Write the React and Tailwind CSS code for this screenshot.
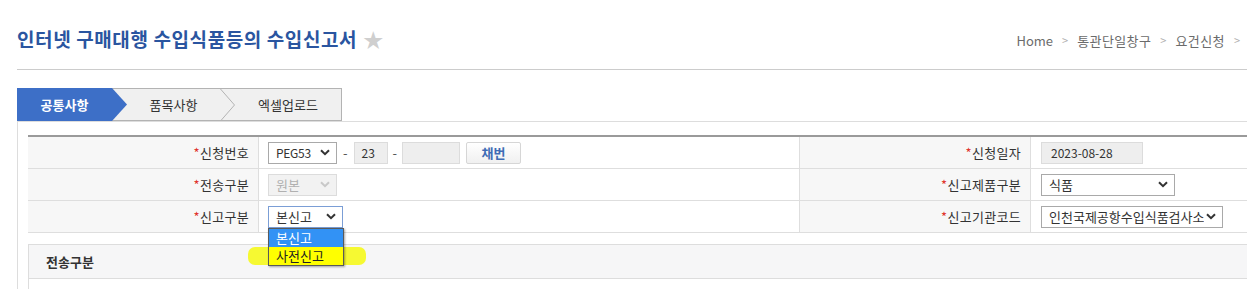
import React from "react";

const FONT = { fontFamily: '"Noto Sans CJK KR", "Noto Sans", sans-serif' };

const Chevron = ({ className = "" }) => (
  <svg width="10" height="7" viewBox="0 0 10 7" className={className}>
    <path d="M1 1.2 L5 5.2 L9 1.2" fill="none" stroke="currentColor" strokeWidth="2" />
  </svg>
);

const FakeSelect = ({ value, width, disabled, focused, small }) => (
  <div
    className={`flex items-center justify-between h-[22px] pl-[7px] pr-[6px] border ${
      small ? "text-[12px] tracking-[-0.3px]" : "text-[13px]"
    } ${width} ${
      disabled
        ? "bg-[#f2f2f2] border-[#dcdcdc] text-[#b0b0b0]"
        : focused
        ? "bg-white border-[#7b9ed6] text-[#333]"
        : "bg-white border-[#a9a9a9] text-[#333]"
    }`}
  >
    <span className="truncate">{value}</span>
    <Chevron className={`shrink-0 ${disabled ? "text-[#c8c8c8]" : "text-[#333]"}`} />
  </div>
);

const Label = ({ children }) => (
  <div className="flex items-center justify-end pr-[9px] bg-[#f7f7f7] border-r border-[#dedede] text-[13px] text-[#333] tracking-[0.3px]">
    <span className="text-[#e0342c]">*</span>
    {children}
  </div>
);

const Cell = ({ children, last }) => (
  <div className={`flex items-center pl-[9px] bg-white ${last ? "" : "border-r border-[#dedede]"}`}>
    {children}
  </div>
);

export default function App() {
  return (
    <div className="w-[1247px] h-[289px] overflow-hidden bg-white" style={FONT}>
      {/* Header */}
      <div className="ml-[17px] h-[70px] flex items-center justify-between border-b border-[#cccccc] pt-[10px]">
        <div className="flex items-center gap-[6px]">
          <h1 className="text-[19px] font-bold text-[#2a55a0] tracking-[0.6px]">
            인터넷 구매대행 수입식품등의 수입신고서
          </h1>
          <span className="text-[20px] leading-none text-[#cfcfcf]">★</span>
        </div>
        <div className="flex items-center gap-[9px] pr-[7px] text-[13px] text-[#6b6b6b] pt-[2px]">
          <span>Home</span>
          <span className="text-[#b0b0b0] text-[11px]">&gt;</span>
          <span className="tracking-[0.4px]">통관단일창구</span>
          <span className="text-[#b0b0b0] text-[11px]">&gt;</span>
          <span className="tracking-[0.4px]">요건신청</span>
          <span className="text-[#b0b0b0] text-[11px]">&gt;</span>
        </div>
      </div>

      {/* Tabs */}
      <div className="ml-[17px] mt-[18px] flex h-[33px] w-[325px] bg-[#f0f0f0] border-t border-r border-b border-[#b3b3b3]">
        <div className="w-[110px] -mt-px h-[33px] flex items-center justify-center pr-[15px] bg-[#3d6fc7] text-white text-[13px] font-bold [clip-path:polygon(0_0,95px_0,110px_50%,95px_100%,0_100%)]">
          공통사항
        </div>
        <div className="w-[93px] flex items-center justify-center text-[13px] text-[#333]">품목사항</div>
        <svg width="15" height="32" viewBox="0 0 15 32" className="shrink-0">
          <path d="M0.5 0 L14.5 16 L0.5 32" fill="none" stroke="#b3b3b3" strokeWidth="1" />
        </svg>
        <div className="flex-1 flex items-center justify-center text-[13px] text-[#333]">엑셀업로드</div>
      </div>

      {/* Body */}
      <div className="ml-[17px] border-l border-t border-[#dddddd] pl-[10px] pt-[13px]">
        <div className="border-t-2 border-[#9a9a9a]">
          <div className="grid grid-cols-[231px_541px_231px_1fr] [&>div]:h-[32px] [&>div]:border-b [&>div]:border-[#dedede]">
            <Label>신청번호</Label>
            <Cell>
              <FakeSelect value="PEG53" width="w-[69px]" small />
              <span className="ml-[6px] text-[13px] text-[#555]">-</span>
              <div className="ml-[6px] w-[34px] h-[22px] bg-[#eeeeee] border border-[#dcdcdc] text-[12px] text-[#333] flex items-center pl-[7px]">23</div>
              <span className="ml-[5px] text-[13px] text-[#555]">-</span>
              <div className="ml-[5px] w-[58px] h-[22px] bg-[#eeeeee] border border-[#dcdcdc]" />
              <button className="ml-[6px] w-[55px] h-[22px] rounded-[2px] border border-[#d6d6d6] bg-gradient-to-b from-white to-[#f0f0f0] text-[13px] font-bold text-[#3f6cb5]">
                채번
              </button>
            </Cell>
            <Label>신청일자</Label>
            <Cell last>
              <div className="ml-px w-[102px] h-[22px] bg-[#eeeeee] border border-[#dcdcdc] text-[12px] text-[#333] flex items-center pl-[9px]">
                2023-08-28
              </div>
            </Cell>

            <Label>전송구분</Label>
            <Cell>
              <FakeSelect value="원본" width="w-[69px]" disabled />
            </Cell>
            <Label>신고제품구분</Label>
            <Cell last>
              <div className="ml-px">
                <FakeSelect value="식품" width="w-[134px]" />
              </div>
            </Cell>

            <Label>신고구분</Label>
            <Cell>
              <div className="relative">
                <FakeSelect value="본신고" width="w-[75px]" focused />
                {/* highlighter mark */}
                <div className="absolute left-[-20px] top-[41px] w-[118px] h-[18px] bg-[#f6f932] rounded-[7px] z-10" />
                {/* open option list */}
                <div className="absolute left-0 top-[22px] w-[76px] border border-[#5a5a5a] bg-white z-20 text-[13px] leading-[18px] shadow-[1px_1px_2px_rgba(0,0,0,0.35)]">
                  <div className="h-[18px] pl-[7px] bg-[#3292f5] text-white">본신고</div>
                  <div className="h-[18px] pl-[7px] bg-[#ffff00] text-[#222]">사전신고</div>
                </div>
              </div>
            </Cell>
            <Label>신고기관코드</Label>
            <Cell last>
              <div className="ml-px">
                <FakeSelect value="인천국제공항수입식품검사소" width="w-[182px]" />
              </div>
            </Cell>
          </div>
        </div>

        {/* Panel */}
        <div className="mt-[11px] border-l border-t border-[#dddddd]">
          <div className="h-[34px] flex items-center pl-[17px] bg-[#f6f6f7] border-b border-[#dddddd] text-[13px] font-bold text-[#333]">
            전송구분
          </div>
          <div className="h-[30px] bg-white" />
        </div>
      </div>
    </div>
  );
}
